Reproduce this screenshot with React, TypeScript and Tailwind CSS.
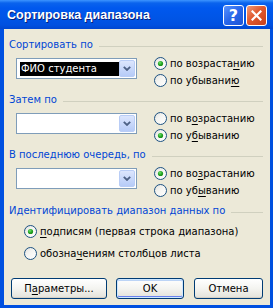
import React from "react";

const Radio = ({ checked }: { checked?: boolean }) => (
  <svg width="13" height="13" viewBox="0 0 13 13" className="shrink-0">
    <defs>
      <linearGradient id="rg" x1="0" y1="0" x2="1" y2="1">
        <stop offset="0" stopColor="#DCDCD7" />
        <stop offset="0.4" stopColor="#F4F4F1" />
        <stop offset="1" stopColor="#FFFFFF" />
      </linearGradient>
      <radialGradient id="dot" cx="0.4" cy="0.35" r="0.7">
        <stop offset="0" stopColor="#6EE46A" />
        <stop offset="0.6" stopColor="#21A121" />
        <stop offset="1" stopColor="#178A17" />
      </radialGradient>
    </defs>
    <circle cx="6.5" cy="6.5" r="6" fill="url(#rg)" stroke="#1C5180" strokeWidth="1" />
    {checked && <circle cx="6.5" cy="6.5" r="2.6" fill="url(#dot)" />}
  </svg>
);

const Header = ({ children }: { children: React.ReactNode }) => (
  <div className="flex items-center h-[13px] pr-[7px]">
    <span className="text-[#0046D5] whitespace-nowrap leading-[13px]">{children}</span>
    <div className="flex-1 h-px bg-[#D0D0BF] ml-[6px] mt-[3px]" />
  </div>
);

const Combo = ({ value }: { value?: string }) => (
  <div className="w-[121px] h-[21px] border border-[#7F9DB9] bg-white flex items-center p-[1px] mt-[3px]">
    <div className="flex-1 h-full flex items-center pl-[2px]">
      {value && (
        <div className="bg-black text-white h-[14px] w-[99px] flex items-center pl-[1px] leading-[14px]">
          {value}
        </div>
      )}
    </div>
    <div className="w-[16px] h-full rounded-[2px] border border-[#B9CDF6] bg-gradient-to-b from-[#DCE6FD] to-[#B6CBF7] flex items-center justify-center">
      <svg width="8" height="5" viewBox="0 0 8 5">
        <polyline points="0.8,0.8 4,4 7.2,0.8" fill="none" stroke="#4D6185" strokeWidth="1.8" />
      </svg>
    </div>
  </div>
);

const RadioRow = ({
  checked,
  children,
  h = "h-[17px]",
}: {
  checked?: boolean;
  children: React.ReactNode;
  h?: string;
}) => (
  <div className={`flex items-center ${h}`}>
    <Radio checked={checked} />
    <span className="ml-[3px] whitespace-nowrap">{children}</span>
  </div>
);

const U = ({ children }: { children: React.ReactNode }) => (
  <span className="underline decoration-1 underline-offset-[2px]">{children}</span>
);

const Section = ({
  title,
  value,
  first,
  a,
  b,
}: {
  title: string;
  value?: string;
  first: boolean;
  a: React.ReactNode;
  b: React.ReactNode;
}) => (
  <div className="mb-[4px]">
    <Header>{title}</Header>
    <div className="flex mt-[4px] ml-[7px]">
      <Combo value={value} />
      <div className="ml-[17px] flex flex-col">
        <RadioRow checked={first}>{a}</RadioRow>
        <RadioRow checked={!first}>{b}</RadioRow>
      </div>
    </div>
  </div>
);

const Btn = ({
  w,
  def,
  children,
}: {
  w: string;
  def?: boolean;
  children: React.ReactNode;
}) => (
  <div
    className={`${w} h-[21px] rounded-[3px] border border-[#003C74] bg-gradient-to-b from-[#FFFFFF] via-[#F4F4F0] to-[#E3E2DA] flex items-center justify-center ${
      def ? "shadow-[inset_0_0_0_1px_#CEE7FF,inset_0_-1px_0_1px_#6982EE,inset_0_1px_0_1px_#BCD4F6]" : "shadow-[inset_0_-1px_0_0_#D6D0C5]"
    }`}
  >
    {children}
  </div>
);

export default function App() {
  return (
    <div
      className="w-[273px] h-[308px] flex flex-col text-[10px] text-black"
      style={{ fontFamily: '"DejaVu Sans", Verdana, sans-serif' }}
    >
      <div className="h-[29px] shrink-0 flex items-start bg-[linear-gradient(to_bottom,#3D95FF_0px,#0A63ED_3px,#0058EE_8px,#0055E6_18px,#0050E0_25px,#0046D0_29px)]">
        <div
          className="ml-[7px] mt-[8px] text-white font-bold text-[12.5px] leading-[15px] whitespace-nowrap [text-shadow:1px_1px_0_#0A1F76]"
          style={{ fontFamily: '"Liberation Sans", Arial, sans-serif' }}
        >
          Сортировка диапазона
        </div>
        <div className="flex-1" />
        <div className="mt-[5px] flex gap-[2px] mr-[6px]">
          <div className="w-[21px] h-[21px] rounded-[3px] border border-white bg-[linear-gradient(135deg,#5A93FF_0%,#2866E9_50%,#1D55D6_100%)] flex items-center justify-center">
            <span className="text-white font-bold text-[16px] leading-[16px]">?</span>
          </div>
          <div className="w-[21px] h-[21px] rounded-[3px] border border-white bg-[linear-gradient(135deg,#F09A78_0%,#E0592F_45%,#C8401A_100%)] flex items-center justify-center">
            <svg width="11" height="11" viewBox="0 0 11 11">
              <path d="M1.5 1.5 L9.5 9.5 M9.5 1.5 L1.5 9.5" stroke="white" strokeWidth="2.2" strokeLinecap="square" />
            </svg>
          </div>
        </div>
      </div>
      <div className="flex-1 border-l-[4px] border-r-[3px] border-b-[3px] border-[#0050E0] bg-[#ECE9D8] pl-[5px] pt-[9px] flex flex-col">
        <Section
          title="Сортировать по"
          value="ФИО студента"
          first={true}
          a={<>по возраста<U>н</U>ию</>}
          b={<>по убывани<U>ю</U></>}
        />
        <Section
          title="Затем по"
          first={false}
          a={<>по в<U>о</U>зрастанию</>}
          b={<>по у<U>б</U>ыванию</>}
        />
        <Section
          title="В последнюю очередь, по"
          first={true}
          a={<>по во<U>з</U>растанию</>}
          b={<>по уб<U>ы</U>ванию</>}
        />
        <div className="mt-[1px]">
          <Header>Идентифицировать диапазон данных по</Header>
          <div className="ml-[15px] mt-[3px] flex flex-col">
            <RadioRow checked h="h-[22px]">
              <U>п</U>одписям (первая строка диапазона)
            </RadioRow>
            <RadioRow h="h-[22px]">
              обозна<U>ч</U>ениям столбцов листа
            </RadioRow>
          </div>
        </div>
        <div className="flex mt-[14px] ml-[2px]">
          <Btn w="w-[96px]">
            П<U>а</U>раметры...
          </Btn>
          <div className="w-[9px]" />
          <Btn w="w-[68px]" def>
            OK
          </Btn>
          <div className="w-[10px]" />
          <Btn w="w-[69px]">Отмена</Btn>
        </div>
      </div>
    </div>
  );
}
